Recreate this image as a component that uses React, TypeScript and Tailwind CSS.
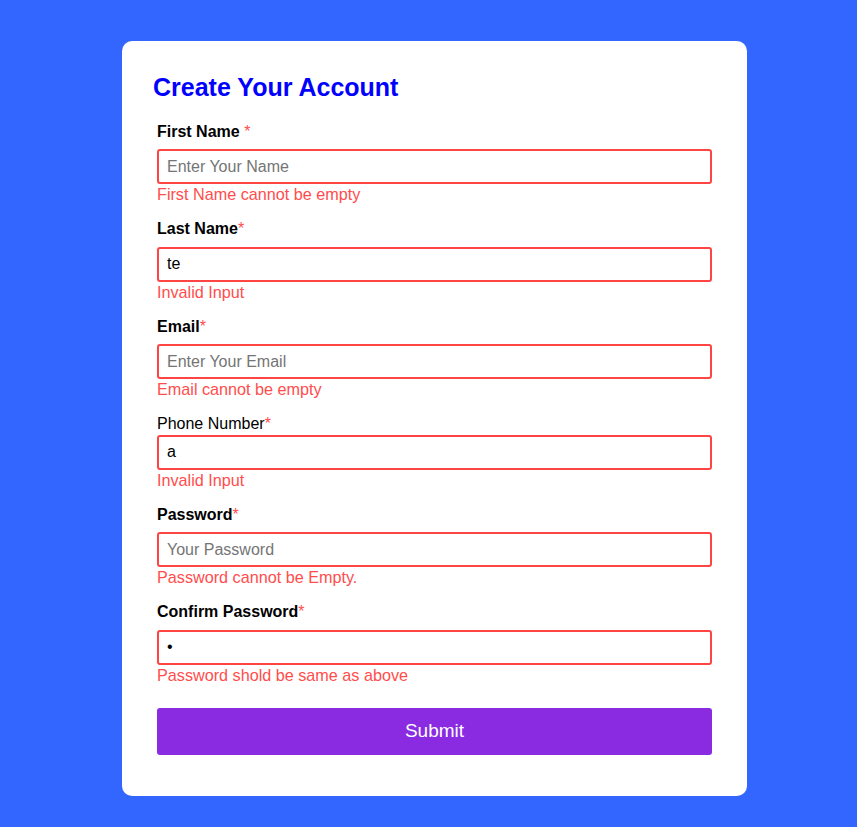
import React from 'react';

type Field = {
  label: string;
  space?: boolean;
  bold?: boolean;
  type: string;
  placeholder: string;
  value?: string;
  error: string;
};

const fields: Field[] = [
  { label: 'First Name', space: true, bold: true, type: 'text', placeholder: 'Enter Your Name', error: 'First Name cannot be empty' },
  { label: 'Last Name', bold: true, type: 'text', placeholder: 'Enter Your Last Name', value: 'te', error: 'Invalid Input' },
  { label: 'Email', bold: true, type: 'email', placeholder: 'Enter Your Email', error: 'Email cannot be empty' },
  { label: 'Phone Number', bold: false, type: 'text', placeholder: 'Enter Your Phone Number', value: 'a', error: 'Invalid Input' },
  { label: 'Password', bold: true, type: 'password', placeholder: 'Your Password', error: 'Password cannot be Empty.' },
  { label: 'Confirm Password', bold: true, type: 'password', placeholder: 'Confirm Password', value: 'a', error: 'Password shold be same as above' },
];

const App = () => {
  return (
    <div className="min-h-screen bg-[#3366ff] pt-[41px] pb-[31px] font-['Liberation_Sans',Arial,sans-serif]">
      <div className="ml-[122px] w-[625px] rounded-[10px] bg-white pl-[31px] pr-[35px] pt-[32px] pb-[41px]">
        {/* Heading */}
        <h2 className="text-[25px] leading-[28px] font-bold text-[#0000ff]">Create Your Account</h2>

        <form className="mt-[22px] pl-[4px]" onSubmit={(e) => e.preventDefault()}>
          {fields.map((field, index) => (
            <div key={index} className="mb-[16.6px]">
              <div
                className={
                  field.bold
                    ? 'mb-[8px] text-[16px] leading-[18.4px] font-bold text-black'
                    : 'mb-[1.3px] text-[16px] leading-[18.4px] font-normal text-black'
                }
              >
                {field.label}
                {field.space ? ' ' : ''}
                <span className="font-normal text-[#ff4d4d]">*</span>
              </div>
              <input
                type={field.type}
                placeholder={field.placeholder}
                defaultValue={field.value}
                className="block h-[35px] w-full rounded-[3px] border-2 border-[#ff4444] bg-white px-[8px] text-[16px] text-black outline-none placeholder:text-[#757575]"
              />
              <div className="pt-[1px] text-[16.2px] leading-[18.4px] text-[#ff4d4d]">{field.error}</div>
            </div>
          ))}

          <button
            type="submit"
            className="mt-[23.6px] block h-[47px] w-full rounded-[3px] bg-[#8a2be2] text-[19px] text-white"
          >
            Submit
          </button>
        </form>
      </div>
    </div>
  );
};

export default App;
